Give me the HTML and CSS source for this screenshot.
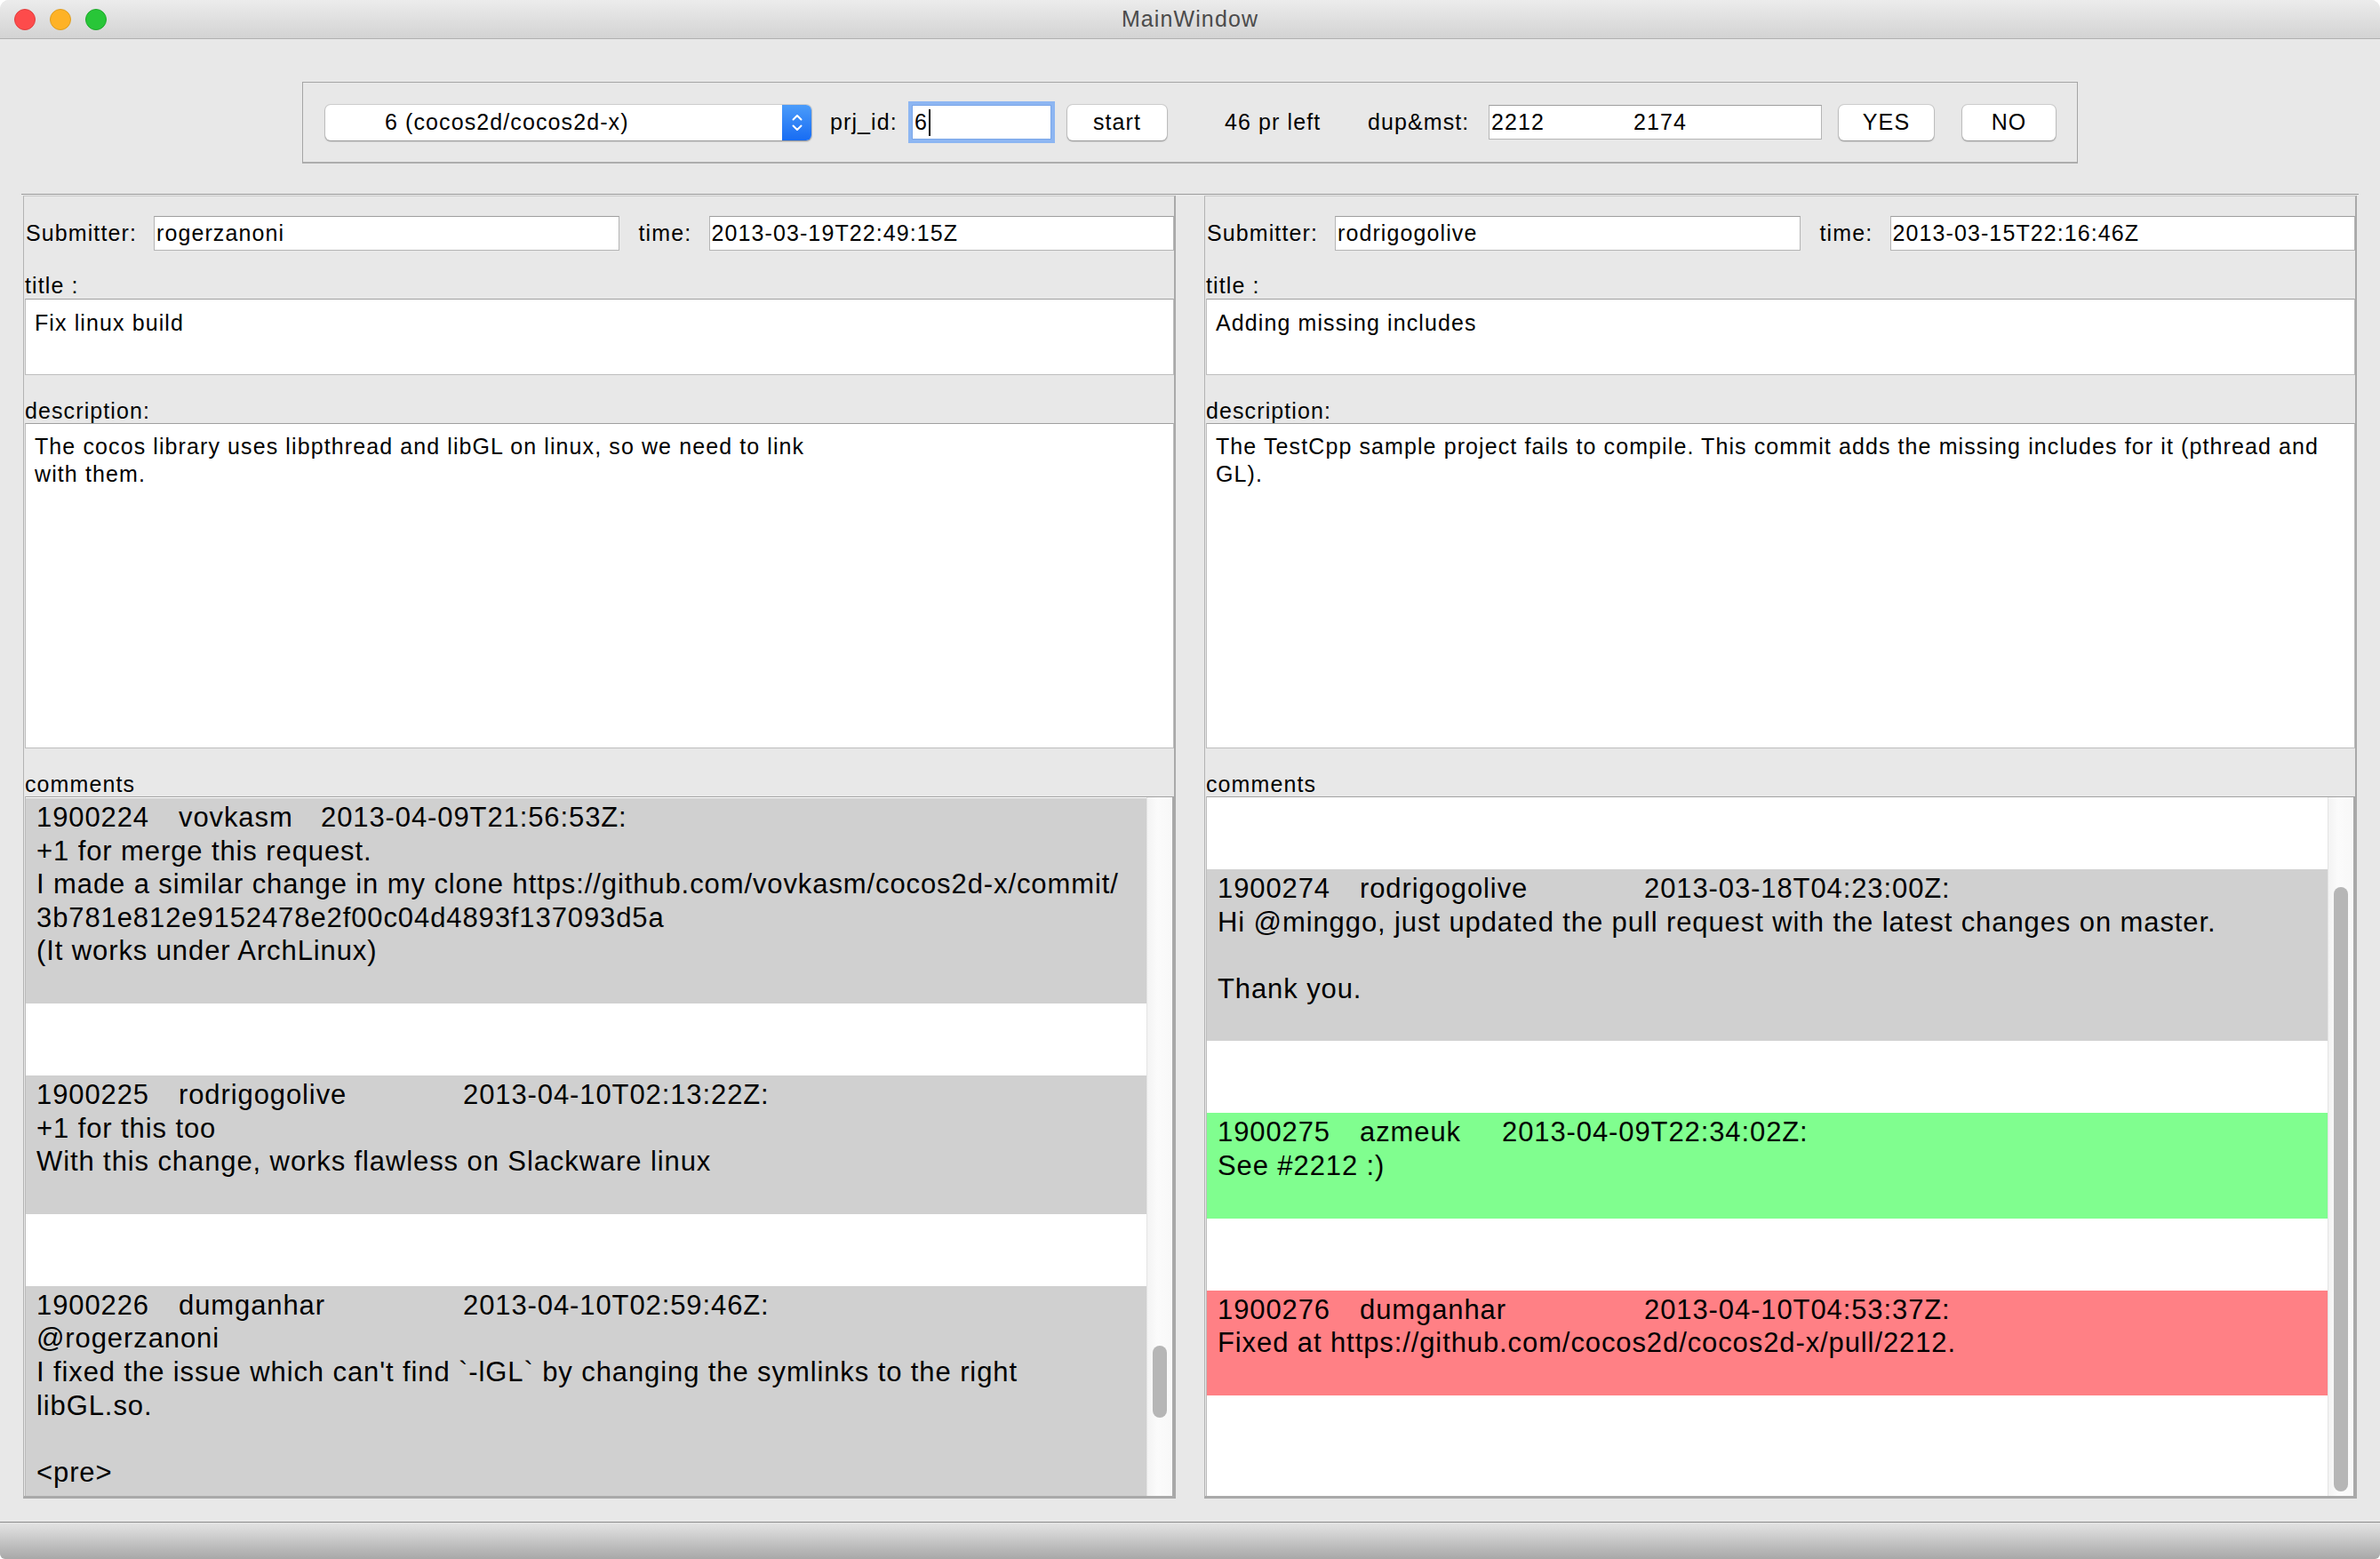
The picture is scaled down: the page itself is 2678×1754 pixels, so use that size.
FILE: index.html
```html
<!DOCTYPE html>
<html>
<head>
<meta charset="utf-8">
<title>MainWindow</title>
<link rel="stylesheet" href="styles.css">
</head>
<body>
<div class="window">
  <div class="titlebar">
    <div class="lights">
      <span class="light l-red"></span>
      <span class="light l-yellow"></span>
      <span class="light l-green"></span>
    </div>
    <div class="wtitle">MainWindow</div>
    <div></div>
  </div>

  <div class="toolbar">
    <div class="combo">
      <div class="combo-text">6 (cocos2d/cocos2d-x)</div>
      <div class="combo-arrow">
        <svg width="14" height="26" viewBox="0 0 14 26"><path d="M2.5 9.5 L7 5 L11.5 9.5" fill="none" stroke="#fff" stroke-width="2" stroke-linecap="round" stroke-linejoin="round"/><path d="M2.5 16.5 L7 21 L11.5 16.5" fill="none" stroke="#fff" stroke-width="2" stroke-linecap="round" stroke-linejoin="round"/></svg>
      </div>
    </div>
    <div class="lbl lbl-prj">prj_id:</div>
    <div class="field focus"><span>6</span><span class="caret"></span></div>
    <div class="btn btn-start">start</div>
    <div class="lbl lbl-left">46 pr left</div>
    <div class="lbl lbl-dup">dup&amp;mst:</div>
    <div class="field dup"><span class="tab">2212</span><span>2174</span></div>
    <div class="btn btn-yes">YES</div>
    <div class="btn btn-no">NO</div>
  </div>

  <div class="splitter">
    <div class="panel">
      <div class="row">
        <div class="lbl lbl-sub">Submitter:</div>
        <div class="field grow">rogerzanoni</div>
        <div class="lbl lbl-time">time:</div>
        <div class="field grow">2013-03-19T22:49:15Z</div>
      </div>
      <div class="sec-lbl first">title :</div>
      <div class="box title-box">Fix linux build</div>
      <div class="sec-lbl">description:</div>
      <div class="box desc-box">The cocos library uses libpthread and libGL on linux, so we need to link<br>with them.</div>
      <div class="sec-lbl">comments</div>
      <div class="cbox">
        <div class="clist">
          <div class="cmt c-gray">
            <div class="ln"><span class="c1">1900224</span><span class="c2">vovkasm</span><span>2013-04-09T21:56:53Z:</span></div>
            <div class="ln">+1 for merge this request.</div>
            <div class="ln">I made a similar change in my clone https://github.com/vovkasm/cocos2d-x/commit/</div>
            <div class="ln">3b781e812e9152478e2f00c04d4893f137093d5a</div>
            <div class="ln">(It works under ArchLinux)</div>
          </div>
          <div class="cmt c-gray">
            <div class="ln"><span class="c1">1900225</span><span class="c2 wide">rodrigogolive</span><span>2013-04-10T02:13:22Z:</span></div>
            <div class="ln">+1 for this too</div>
            <div class="ln">With this change, works flawless on Slackware linux</div>
          </div>
          <div class="cmt c-gray">
            <div class="ln"><span class="c1">1900226</span><span class="c2 wide">dumganhar</span><span>2013-04-10T02:59:46Z:</span></div>
            <div class="ln">@rogerzanoni</div>
            <div class="ln">I fixed the issue which can't find `-lGL` by changing the symlinks to the right</div>
            <div class="ln">libGL.so.</div>
            <div class="ln"></div>
            <div class="ln">&lt;pre&gt;</div>
          </div>
        </div>
        <div class="track"><div class="thumb" style="margin-top:617px;height:81px"></div></div>
      </div>
    </div>

    <div class="handle"></div>

    <div class="panel">
      <div class="row">
        <div class="lbl lbl-sub">Submitter:</div>
        <div class="field grow">rodrigogolive</div>
        <div class="lbl lbl-time">time:</div>
        <div class="field grow">2013-03-15T22:16:46Z</div>
      </div>
      <div class="sec-lbl first">title :</div>
      <div class="box title-box">Adding missing includes</div>
      <div class="sec-lbl">description:</div>
      <div class="box desc-box">The TestCpp sample project fails to compile. This commit adds the missing includes for it (pthread and<br>GL).</div>
      <div class="sec-lbl">comments</div>
      <div class="cbox">
        <div class="clist pad-top">
          <div class="cmt c-gray">
            <div class="ln"><span class="c1">1900274</span><span class="c2 wide">rodrigogolive</span><span>2013-03-18T04:23:00Z:</span></div>
            <div class="ln">Hi @minggo, just updated the pull request with the latest changes on master.</div>
            <div class="ln"></div>
            <div class="ln">Thank you.</div>
          </div>
          <div class="cmt c-green">
            <div class="ln"><span class="c1">1900275</span><span class="c2">azmeuk</span><span>2013-04-09T22:34:02Z:</span></div>
            <div class="ln">See #2212 :)</div>
          </div>
          <div class="cmt c-red">
            <div class="ln"><span class="c1">1900276</span><span class="c2 wide">dumganhar</span><span>2013-04-10T04:53:37Z:</span></div>
            <div class="ln">Fixed at https://github.com/cocos2d/cocos2d-x/pull/2212.</div>
          </div>
        </div>
        <div class="track"><div class="thumb" style="margin-top:101px;height:680px"></div></div>
      </div>
    </div>
  </div>

  <div class="statusbar"></div>
</div>
</body>
</html>
```

FILE: styles.css
```css
* { box-sizing: border-box; }
html, body { margin: 0; padding: 0; }
body {
  width: 2678px;
  height: 1754px;
  overflow: hidden;
  background: #ffffff;
  font-family: "Liberation Sans", Arial, sans-serif;
  color: #000;
}
.window {
  width: 2678px;
  height: 1754px;
  background: #e8e8e8;
  display: flex;
  flex-direction: column;
  border-radius: 10px 10px 6px 6px;
  overflow: hidden;
}

/* title bar */
.titlebar {
  flex: none;
  height: 44px;
  background: linear-gradient(#ececec, #d3d3d3);
  border-bottom: 1px solid #b1b1b1;
  display: grid;
  grid-template-columns: 1fr auto 1fr;
  align-items: center;
}
.lights { display: flex; gap: 16px; padding-left: 16px; }
.light { width: 24px; height: 24px; border-radius: 50%; display: block; }
.l-red { background: #fd4b4b; border: 1px solid #e03e3e; }
.l-yellow { background: #feb226; border: 1px solid #de9d1f; }
.l-green { background: #28c638; border: 1px solid #1ea92b; }
.wtitle {
  font-size: 25px;
  letter-spacing: 1.1px;
  color: #4b4b4b;
}

/* generic text */
.lbl, .field, .btn, .combo-text, .sec-lbl, .box {
  font-size: 25px;
  letter-spacing: 1.1px;
  white-space: nowrap;
}

/* toolbar group */
.toolbar {
  flex: none;
  margin: 48px 0 0 340px;
  width: 1998px;
  height: 92px;
  border: 1px solid #a4a4a4;
  border-bottom: 2px solid #adadad;
  display: flex;
  align-items: center;
}
.combo {
  margin-left: 25px;
  width: 547px;
  height: 40px;
  background: #fff;
  border-radius: 6px;
  box-shadow: 0 0 0 1px rgba(0,0,0,0.10), 0 1px 2px rgba(0,0,0,0.35);
  display: flex;
  align-items: center;
}
.combo-text { flex: 1; padding-left: 67px; }
.combo-arrow {
  width: 33px;
  height: 40px;
  border-radius: 0 6px 6px 0;
  background: linear-gradient(#4b9cfa, #176cf3);
  display: flex;
  align-items: center;
  justify-content: center;
}
.lbl-prj { margin-left: 21px; width: 92px; }
.field {
  background: #fff;
  border: 1px solid #b5b5b5;
  border-top-color: #9e9e9e;
  height: 39px;
  display: flex;
  align-items: center;
  padding-left: 2px;
  overflow: hidden;
}
.field.focus {
  width: 157px;
  box-shadow: 0 0 0 4px #8db6f2;
  border-color: #7aa6e8;
}
.caret { display: block; width: 2px; height: 30px; background: #000; margin-left: 1px; }
.btn {
  height: 40px;
  background: #fff;
  border-radius: 6px;
  box-shadow: 0 0 0 1px rgba(0,0,0,0.10), 0 1px 2px rgba(0,0,0,0.35);
  display: flex;
  align-items: center;
  justify-content: center;
}
.btn-start { margin-left: 18px; width: 112px; }
.lbl-left { margin-left: 65px; width: 161px; }
.lbl-dup { width: 136px; }
.field.dup { width: 375px; }
.tab { display: inline-block; width: 160px; }
.btn-yes { margin-left: 19px; width: 107px; }
.btn-no { margin-left: 32px; width: 105px; }

/* splitter and panels */
.splitter {
  flex: none;
  margin: 34px 0 0 24px;
  width: 2630px;
  height: 1468px;
  border-top: 1px solid #9c9c9c;
  padding-top: 1px;
  display: flex;
}
.panel {
  width: 1297px;
  margin-left: 2px;
  border-top: 1px solid #c8c8c8;
  border-left: 1px solid #b3b3b3;
  border-right: 2px solid #a9a9a9;
  border-bottom: 3px solid #a9a9a9;
  display: flex;
  flex-direction: column;
  padding-top: 22px;
}
.handle { width: 32px; flex: none; }
.handle + .panel { margin-left: 0; }

.row {
  height: 39px;
  display: flex;
  align-items: center;
  padding-left: 2px;
  flex: none;
}
.lbl-sub { width: 144px; }
.lbl-time { margin-left: 22px; width: 79px; }
.grow { flex: 1; min-width: 0; }

.sec-lbl {
  flex: none;
  height: 28px;
  line-height: 28px;
  margin-top: 26px;
  padding-left: 1px;
}
.sec-lbl.first { margin-top: 25px; height: 29px; line-height: 29px; }

.box {
  flex: none;
  margin-left: 1px;
  background: #fff;
  border: 1px solid #bdbdbd;
  border-top-color: #a0a0a0;
  padding: 11px 10px 0;
}
.title-box { height: 86px; line-height: 30px; }
.desc-box { height: 366px; line-height: 31px; padding-top: 10px; }

/* comments */
.cbox {
  flex: 1;
  min-height: 0;
  margin-left: 1px;
  background: #fff;
  border-top: 1px solid #a2a2a2;
  border-left: 1px solid #bcbcbc;
  border-right: 2px solid #a9a9a9;
  display: flex;
  overflow: hidden;
}
.clist {
  flex: 1;
  min-width: 0;
  padding-top: 1px;
  overflow: hidden;
  font-size: 31px;
  letter-spacing: 0.9px;
}
.clist.pad-top { padding-top: 81px; }
.cmt { padding: 3px 12px 40px; }
.cmt + .cmt { margin-top: 81px; }
.c-gray { background: #d0d0d0; }
.c-green { background: #80fe8f; }
.c-red { background: #ff8085; }
.ln {
  height: 37.6px;
  line-height: 37.6px;
  white-space: pre;
}
.c1, .c2 { display: inline-block; width: 160px; }
.c2.wide { width: 320px; }

.track {
  width: 29px;
  flex: none;
  background: linear-gradient(90deg, #f3f3f3, #fbfbfb 40%, #f8f8f8);
  border-left: 1px solid #e4e4e4;
}
.thumb {
  width: 16px;
  margin-left: 6px;
  border-radius: 8px;
  background: #b6b6b6;
}

/* bottom bar */
.statusbar {
  flex: none;
  margin-top: 26px;
  height: 42px;
  border-top: 1px solid #8c8c8c;
  background: linear-gradient(#e4e4e4, #a8a8a8);
}
```
